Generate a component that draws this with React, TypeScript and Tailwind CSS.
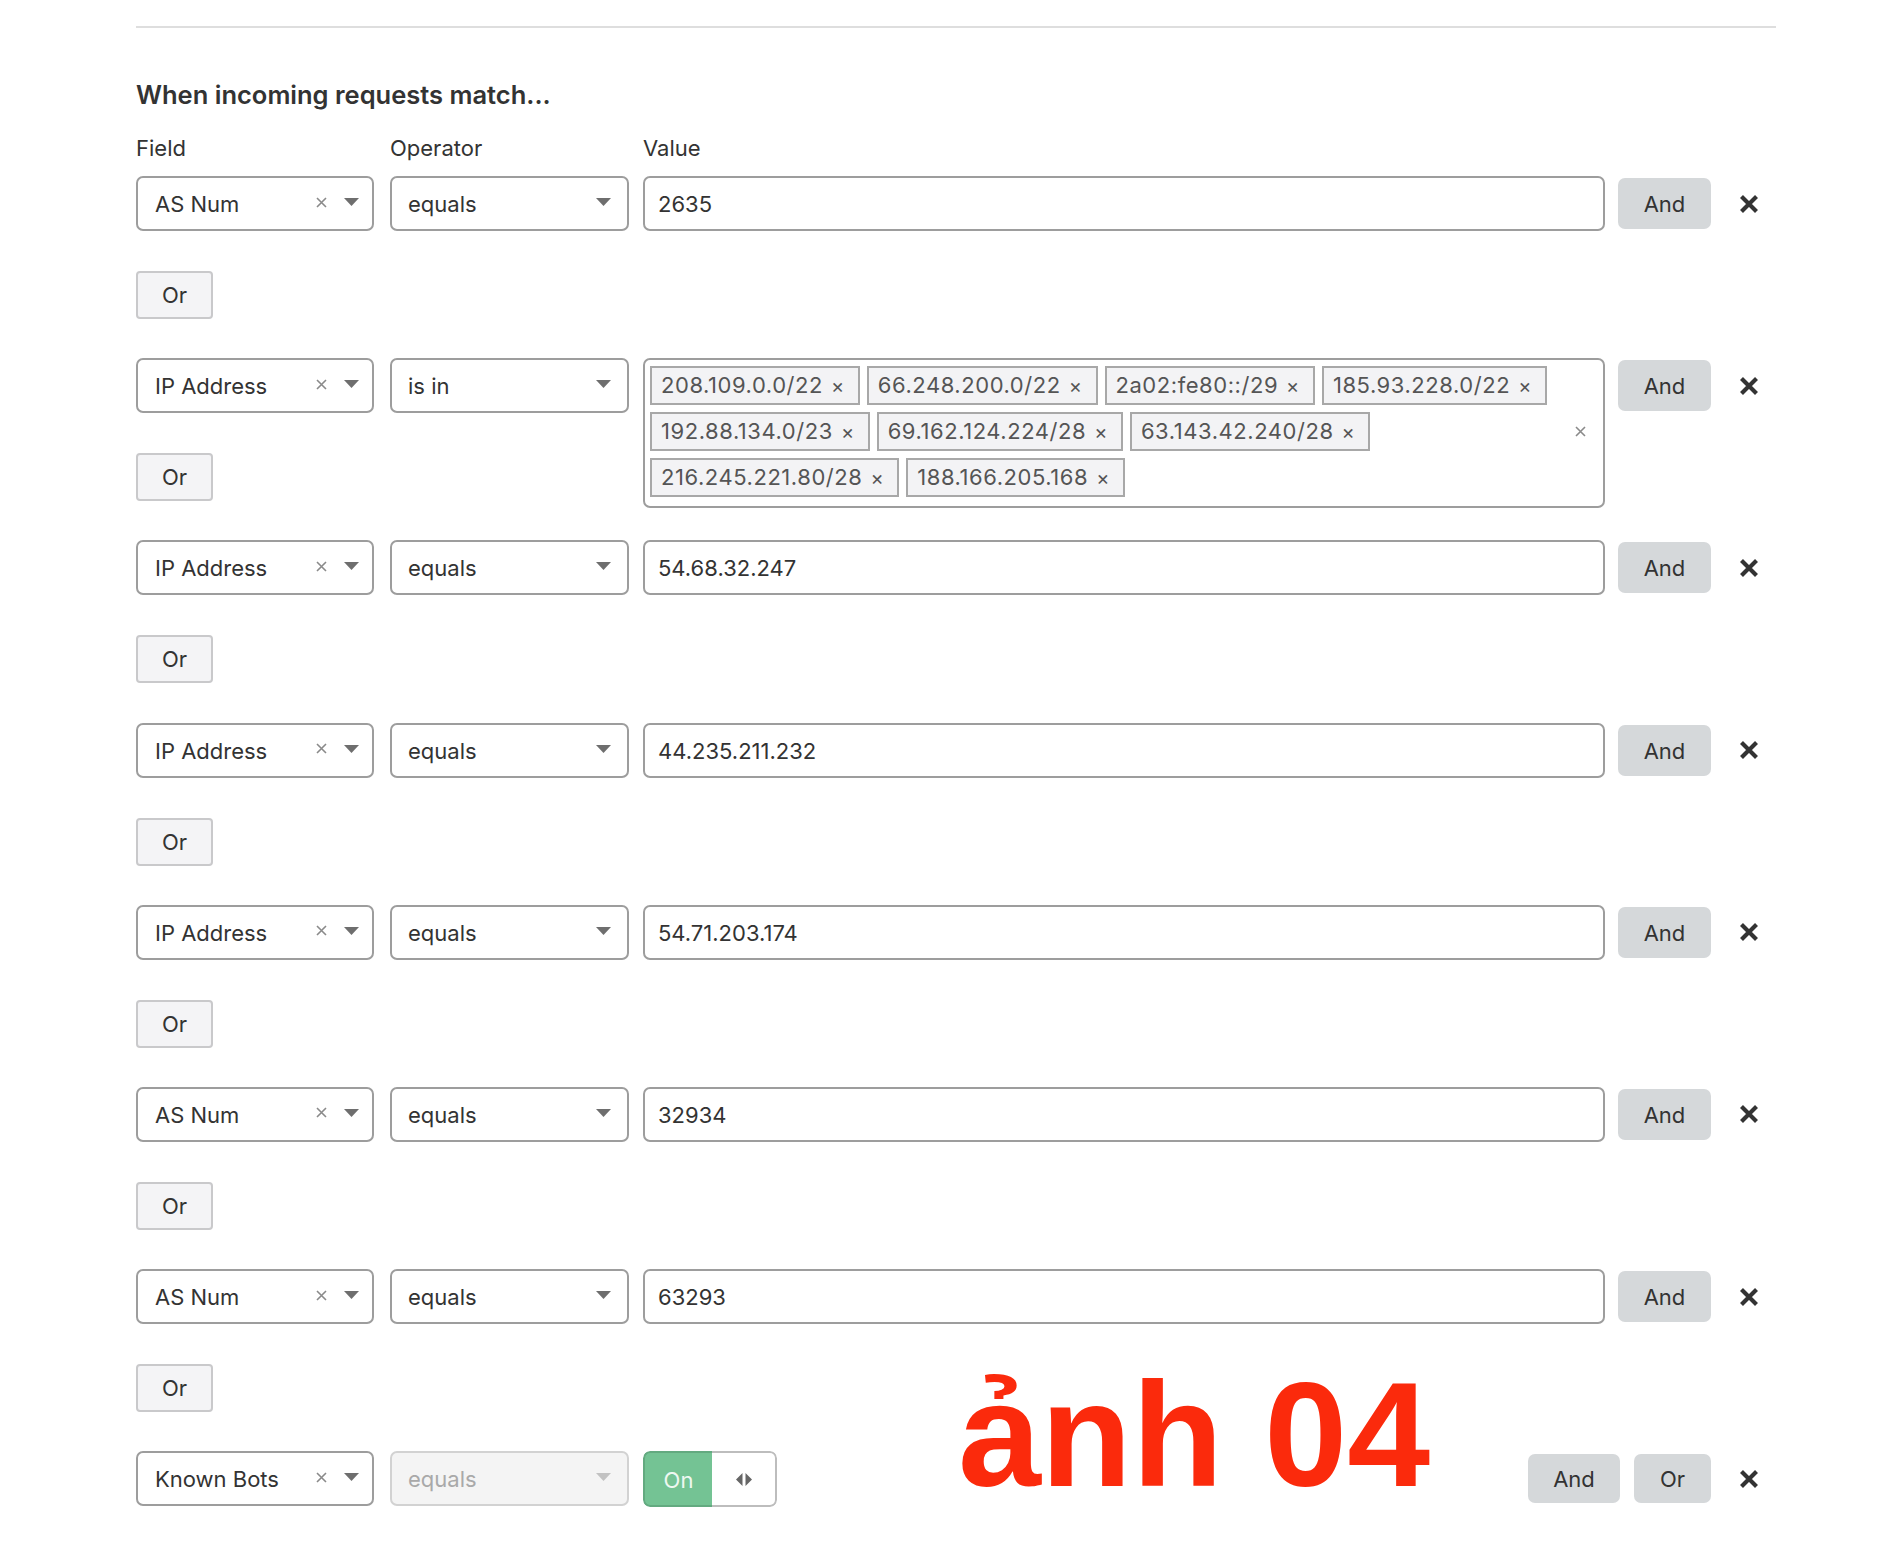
import React from 'react';

type Row = {
  field: string;
  op: string;
  value?: string;
  tags?: string[];
};

const rows: Row[] = [
  { field: 'AS Num', op: 'equals', value: '2635' },
  {
    field: 'IP Address',
    op: 'is in',
    tags: [
      '208.109.0.0/22',
      '66.248.200.0/22',
      '2a02:fe80::/29',
      '185.93.228.0/22',
      '192.88.134.0/23',
      '69.162.124.224/28',
      '63.143.42.240/28',
      '216.245.221.80/28',
      '188.166.205.168',
    ],
  },
  { field: 'IP Address', op: 'equals', value: '54.68.32.247' },
  { field: 'IP Address', op: 'equals', value: '44.235.211.232' },
  { field: 'IP Address', op: 'equals', value: '54.71.203.174' },
  { field: 'AS Num', op: 'equals', value: '32934' },
  { field: 'AS Num', op: 'equals', value: '63293' },
];

const Caret = ({ light }: { light?: boolean }) => (
  <svg width="15" height="8" viewBox="0 0 15 8" className="-mt-[3px] shrink-0">
    <path d="M0 0H15L7.5 8Z" fill={light ? '#c2c2c2' : '#6e6e6e'} />
  </svg>
);

const ThinX = ({ className }: { className?: string }) => (
  <svg width="11" height="11" viewBox="0 0 11 11" className={className}>
    <path d="M1 1L10 10M10 1L1 10" stroke="#8a8a8a" strokeWidth="1.6" />
  </svg>
);

const BoldX = () => (
  <svg width="20" height="20" viewBox="0 0 20 20">
    <path d="M2.5 2.5L17.5 17.5M17.5 2.5L2.5 17.5" stroke="#333" strokeWidth="4.2" />
  </svg>
);

const FieldSelect = ({ label }: { label: string }) => (
  <div className="flex h-[55px] w-[238px] shrink-0 items-center rounded-[7px] border-2 border-[#9d9d9d] bg-white pl-[17px] pr-[13px]">
    <span className="mt-[2px] flex-1 text-[22px] text-[#333]">{label}</span>
    <ThinX className="-mt-[3px] mr-[17px]" />
    <Caret />
  </div>
);

const OpSelect = ({ label, disabled }: { label: string; disabled?: boolean }) => (
  <div
    className={
      disabled
        ? 'ml-[16px] flex h-[55px] w-[239px] shrink-0 items-center rounded-[7px] border-2 border-[#d2d2d2] bg-[#f4f4f4] pl-[16px] pr-[16px]'
        : 'ml-[16px] flex h-[55px] w-[239px] shrink-0 items-center rounded-[7px] border-2 border-[#9d9d9d] bg-white pl-[16px] pr-[16px]'
    }
  >
    <span className={disabled ? 'mt-[2px] flex-1 text-[22px] text-[#a9a9a9]' : 'mt-[2px] flex-1 text-[22px] text-[#333]'}>
      {label}
    </span>
    <Caret light={disabled} />
  </div>
);

const AndButton = () => (
  <div className="flex h-[55px] items-center">
    <button className="flex h-[51px] w-[93px] items-center justify-center rounded-[7px] bg-[#d5d8da] pt-[2px] text-[22px] text-[#333]">
      And
    </button>
  </div>
);

const RemoveCell = () => (
  <div className="flex h-[55px] w-[65px] shrink-0 items-center pl-[28px]">
    <BoldX />
  </div>
);

const Tag = ({ text }: { text: string }) => (
  <div className="flex h-[39px] items-center border-2 border-[#a8a8a8] bg-[#f3f3f5] pl-[9px] pr-[13px] text-[22px] tracking-[0.55px] text-[#555]">
    <span>{text}</span>
    <span className="ml-[8px] text-[20px]">×</span>
  </div>
);

const ConditionRow = ({ row }: { row: Row }) => (
  <div className="flex h-[182.2px] items-start">
    <div className="flex flex-col">
      <div className="flex">
        <FieldSelect label={row.field} />
        <OpSelect label={row.op} />
      </div>
      <button className="mt-[40px] flex h-[48px] w-[77px] items-center justify-center rounded-[4px] border-2 border-[#c9c9cb] bg-[#f4f4f6] pt-[1px] text-[22px] text-[#333]">
        Or
      </button>
    </div>
    <div className="ml-[14px] mr-[13px] flex-1">
      {row.tags ? (
        <div className="flex h-[150px] items-start rounded-[7px] border-2 border-[#9d9d9d] bg-white pl-[5px] pr-[17px] pt-[6px]">
          <div className="flex flex-1 flex-wrap gap-x-[7px] gap-y-[7px]">
            {row.tags.map((t) => (
              <Tag key={t} text={t} />
            ))}
          </div>
          <div className="flex h-[130px] items-center">
            <ThinX />
          </div>
        </div>
      ) : (
        <div className="flex h-[55px] items-center rounded-[7px] border-2 border-[#9d9d9d] bg-white pl-[13px] pt-[2px] text-[22px] text-[#333]">
          {row.value}
        </div>
      )}
    </div>
    <AndButton />
    <RemoveCell />
  </div>
);

export default function App() {
  return (
    <div className="relative min-h-[1568px] w-full bg-white font-['Inter','Noto_Sans',sans-serif]">
      <div className="ml-[136px] w-[1640px] pt-[26px]">
        <div className="h-[2px] bg-[#dedede]" />
        <h2 className="mt-[52px] text-[25.5px] font-semibold leading-[30px] text-[#333]">
          When incoming requests match...
        </h2>
        <div className="mt-[24px] flex text-[22px] leading-[28px] text-[#333]">
          <div className="w-[254px]">Field</div>
          <div className="w-[253px]">Operator</div>
          <div>Value</div>
        </div>
        <div className="mt-[14px]">
          {rows.map((r, i) => (
            <ConditionRow key={i} row={r} />
          ))}
          <div className="flex items-start">
            <FieldSelect label="Known Bots" />
            <OpSelect label="equals" disabled />
            <div className="ml-[14px] flex flex-1 items-start">
              <div className="flex h-[56px] overflow-hidden rounded-[7px]">
                <div className="flex w-[69px] items-center justify-center rounded-l-[7px] border-2 border-r-0 border-[#63aa80] bg-[#74c394] pt-[2px] text-[22px] text-[#eef8f1]">
                  On
                </div>
                <div className="flex w-[65px] items-center justify-center rounded-r-[7px] border-2 border-l-0 border-[#bdbdbd] bg-white">
                  <svg width="16" height="13" viewBox="0 0 16 13">
                    <path d="M6.5 0V13L0 6.5Z M9.5 0V13L16 6.5Z" fill="#666" />
                  </svg>
                </div>
              </div>
              <div className="ml-auto flex h-[55px] items-center gap-[14px]">
                <button className="flex h-[49px] w-[92px] items-center justify-center rounded-[7px] bg-[#d5d8da] pt-[2px] text-[22px] text-[#333]">
                  And
                </button>
                <button className="flex h-[49px] w-[77px] items-center justify-center rounded-[7px] bg-[#d5d8da] pt-[2px] text-[22px] text-[#333]">
                  Or
                </button>
              </div>
            </div>
            <RemoveCell />
          </div>
        </div>
      </div>
      <div className="absolute left-[958px] top-[1360px] font-['Liberation_Sans',Arial,sans-serif] text-[149px] font-bold leading-none text-[#fb2a0c]">
        ảnh 04
      </div>
    </div>
  );
}
